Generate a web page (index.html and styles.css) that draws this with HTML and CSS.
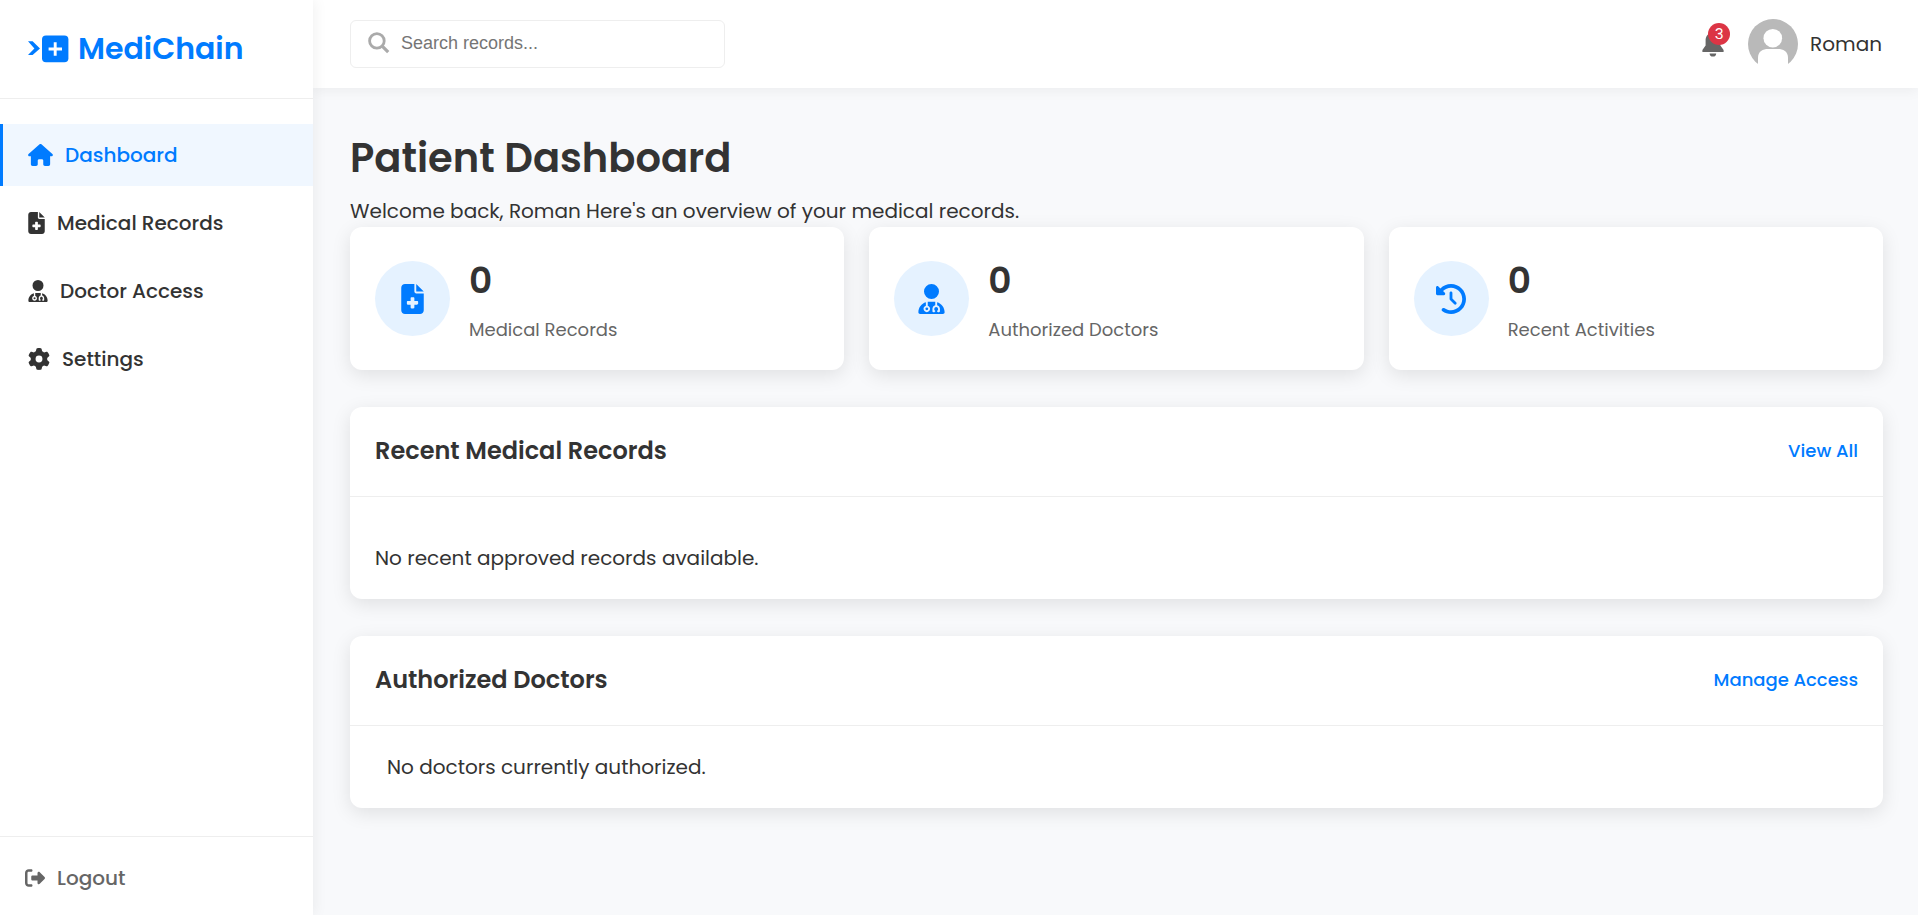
FILE: index.html
```html
<!DOCTYPE html>
<html lang="en">
<head>
<meta charset="utf-8">
<meta name="viewport" content="width=device-width, initial-scale=1">
<title>MediChain - Patient Dashboard</title>
<link rel="stylesheet" href="styles.css">
</head>
<body>
<svg class="sprite" aria-hidden="true">
  <symbol id="i-file" viewBox="0 0 384 512"><path d="M64 0C28.7 0 0 28.7 0 64V448c0 35.3 28.7 64 64 64H320c35.3 0 64-28.7 64-64V160H256c-17.7 0-32-14.3-32-32V0H64zM256 0V128H384L256 0zM160 240c0-8.8 7.2-16 16-16h32c8.8 0 16 7.2 16 16v48h48c8.8 0 16 7.2 16 16v32c0 8.8-7.2 16-16 16H224v48c0 8.8-7.2 16-16 16H176c-8.8 0-16-7.2-16-16V352H112c-8.8 0-16-7.2-16-16V304c0-8.8 7.2-16 16-16h48V240z"/></symbol>
  <symbol id="i-doctor" viewBox="0 0 448 512"><path d="M224 256A128 128 0 1 0 224 0a128 128 0 1 0 0 256zm-96 55.2C54 332.9 0 401.3 0 482.3C0 498.7 13.3 512 29.7 512H418.3c16.4 0 29.7-13.3 29.7-29.7c0-81-54-149.4-128-171.1V362c27.6 7.1 48 32.2 48 62v40c0 8.8-7.2 16-16 16H336c-8.8 0-16-7.2-16-16s7.2-16 16-16V424c0-17.7-14.3-32-32-32s-32 14.3-32 32v24c8.8 0 16 7.2 16 16s-7.2 16-16 16H256c-8.8 0-16-7.2-16-16V424c0-29.8 20.4-54.9 48-62V304.9c-6-.6-12.1-.9-18.3-.9H178.3c-6.2 0-12.3 .3-18.3 .9v65.4c23.1 6.9 40 28.3 40 53.7c0 30.9-25.1 56-56 56s-56-25.1-56-56c0-25.4 16.9-46.8 40-53.7V311.2zM144 448a24 24 0 1 0 0-48 24 24 0 1 0 0 48z"/></symbol>
</svg>
<div class="app">
  <aside class="sidebar">
    <div class="brand">
      <svg class="brand-mark" width="41" height="28" viewBox="0 0 41 28" aria-hidden="true">
        <path fill="currentColor" d="M0 6.3H4.6L12 13.5L4.6 20H0L6.4 13.5Z"/>
        <rect x="14" y="0.6" width="26.4" height="26.6" rx="4" fill="currentColor"/>
        <path d="M27.2 7.2V20.8M20.6 14H34" stroke="#fff" stroke-width="2.9" fill="none"/>
      </svg>
      <span class="brand-name">MediChain</span>
    </div>
    <nav class="nav" aria-label="Main">
      <a class="nav-link active" href="#dashboard">
        <svg width="25" height="22" viewBox="0 0 576 512" aria-hidden="true"><path d="M575.8 255.5c0 18-15 32.1-32 32.1h-32l.7 160.2c0 2.7-.2 5.4-.5 8.1V472c0 22.1-17.9 40-40 40H456c-1.1 0-2.2 0-3.3-.1c-1.4 .1-2.8 .1-4.2 .1H416 392c-22.1 0-40-17.9-40-40V448 384c0-17.7-14.3-32-32-32H256c-17.7 0-32 14.3-32 32v64 24c0 22.1-17.9 40-40 40H160 128.1c-1.5 0-3-.1-4.5-.2c-1.2 .1-2.4 .2-3.6 .2H104c-22.1 0-40-17.9-40-40V360c0-.9 0-1.9 .1-2.8V287.6H32c-18 0-32-14-32-32.1c0-9 3-17 10-24L266.4 8c7-7 15-8 22-8s15 2 21 7L564.8 231.5c8 7 12 15 11 24z"/></svg>
        <span>Dashboard</span>
      </a>
      <a class="nav-link" href="#records">
        <svg width="17" height="22" aria-hidden="true"><use href="#i-file"/></svg>
        <span>Medical Records</span>
      </a>
      <a class="nav-link" href="#access">
        <svg width="20" height="22" aria-hidden="true"><use href="#i-doctor"/></svg>
        <span>Doctor Access</span>
      </a>
      <a class="nav-link" href="#settings">
        <svg width="22" height="22" viewBox="0 0 512 512" aria-hidden="true"><path d="M495.9 166.6c3.2 8.7 .5 18.4-6.4 24.6l-43.3 39.4c1.1 8.3 1.7 16.8 1.7 25.4s-.6 17.1-1.7 25.4l43.3 39.4c6.9 6.2 9.6 15.9 6.4 24.6c-4.4 11.9-9.7 23.3-15.8 34.3l-4.7 8.1c-6.6 11-14 21.4-22.1 31.2c-5.9 7.2-15.7 9.6-24.5 6.8l-55.7-17.7c-13.4 10.3-28.2 18.9-44 25.4l-12.5 57.1c-2 9.1-9 16.3-18.2 17.8c-13.8 2.3-28 3.5-42.5 3.5s-28.7-1.2-42.5-3.5c-9.2-1.5-16.2-8.7-18.2-17.8l-12.5-57.1c-15.8-6.5-30.6-15.1-44-25.4L83.1 425.9c-8.8 2.8-18.6 .3-24.5-6.8c-8.1-9.8-15.5-20.2-22.1-31.2l-4.7-8.1c-6.1-11-11.4-22.4-15.8-34.3c-3.2-8.7-.5-18.4 6.4-24.6l43.3-39.4C64.6 273.1 64 264.6 64 256s.6-17.1 1.7-25.4L22.4 191.2c-6.9-6.2-9.6-15.9-6.4-24.6c4.4-11.9 9.7-23.3 15.8-34.3l4.7-8.1c6.6-11 14-21.4 22.1-31.2c5.9-7.2 15.7-9.6 24.5-6.8l55.7 17.7c13.4-10.3 28.2-18.9 44-25.4l12.5-57.1c2-9.1 9-16.3 18.2-17.8C227.3 1.2 241.5 0 256 0s28.7 1.2 42.5 3.5c9.2 1.5 16.2 8.7 18.2 17.8l12.5 57.1c15.8 6.5 30.6 15.1 44 25.4l55.7-17.7c8.8-2.8 18.6-.3 24.5 6.8c8.1 9.8 15.5 20.2 22.1 31.2l4.7 8.1c6.1 11 11.4 22.4 15.8 34.3zM256 336a80 80 0 1 0 0-160 80 80 0 1 0 0 160z"/></svg>
        <span>Settings</span>
      </a>
    </nav>
    <div class="sidebar-footer">
      <a class="logout" href="#logout">
        <svg width="20" height="20" viewBox="0 0 512 512" aria-hidden="true"><path d="M377.9 105.9L500.7 228.7c7.2 7.2 11.3 17.1 11.3 27.3s-4.1 20.1-11.3 27.3L377.9 406.1c-6.4 6.4-15 9.9-24 9.9c-18.7 0-33.9-15.2-33.9-33.9l0-62.1-128 0c-17.7 0-32-14.3-32-32l0-64c0-17.7 14.3-32 32-32l128 0 0-62.1c0-18.7 15.2-33.9 33.9-33.9c9 0 17.6 3.6 24 9.9zM160 96L96 96c-17.7 0-32 14.3-32 32l0 256c0 17.7 14.3 32 32 32l64 0c17.7 0 32 14.3 32 32s-14.3 32-32 32l-64 0c-53 0-96-43-96-96L0 128C0 75 43 32 96 32l64 0c17.7 0 32 14.3 32 32s-14.3 32-32 32z"/></svg>
        <span>Logout</span>
      </a>
    </div>
  </aside>

  <div class="main">
    <header class="topbar">
      <label class="search">
        <svg width="22" height="22" viewBox="0 0 22 22" aria-hidden="true"><circle cx="8.9" cy="8.9" r="7.3" fill="none" stroke="#aaa" stroke-width="2.8"/><path d="M14.2 14.2L20.2 20.2" stroke="#aaa" stroke-width="3.2"/></svg>
        <input class="search-input" type="search" placeholder="Search records..." aria-label="Search records">
      </label>
      <div class="user-area">
        <button class="bell" type="button" aria-label="Notifications">
          <svg width="22" height="26" viewBox="0 0 22 26" aria-hidden="true"><path d="M11 0C12.2 0 13 .9 13 2C16.6 2.9 18.4 6 18.4 9.6V14.6L21.6 19V21H.4V19L3.6 14.6V9.6C3.6 6 5.4 2.9 9 2C9 .9 9.8 0 11 0ZM7.6 22.4H14.2A3.3 3.1 0 0 1 7.6 22.4Z"/></svg>
          <span class="badge">3</span>
        </button>
        <div class="user">
          <svg class="avatar" width="50" height="50" viewBox="0 0 50 50" role="img" aria-label="Roman's avatar">
            <circle cx="25" cy="25" r="25" fill="#b9b9b9"/>
            <circle cx="24.8" cy="19.2" r="9.3" fill="#fff"/>
            <path d="M10 50V39C10 32 15 30 20 30H30C35 30 40 32 40 39V50Z" fill="#fff"/>
          </svg>
          <span class="user-name">Roman</span>
        </div>
      </div>
    </header>

    <main class="content">
      <h1 class="page-title">Patient Dashboard</h1>
      <p class="text">Welcome back, Roman Here's an overview of your medical records.</p>

      <div class="stats">
        <article class="stat">
          <span class="stat-icon"><svg width="23" height="30" aria-hidden="true"><use href="#i-file"/></svg></span>
          <div><p class="stat-value">0</p><p class="stat-label">Medical Records</p></div>
        </article>
        <article class="stat">
          <span class="stat-icon"><svg width="27" height="30" aria-hidden="true"><use href="#i-doctor"/></svg></span>
          <div><p class="stat-value">0</p><p class="stat-label">Authorized Doctors</p></div>
        </article>
        <article class="stat">
          <span class="stat-icon"><svg width="30" height="30" viewBox="0 0 512 512" aria-hidden="true"><path d="M75 75L41 41C25.9 25.9 0 36.6 0 57.9V168c0 13.3 10.7 24 24 24H134.1c21.4 0 32.1-25.9 17-41l-30.8-30.8C155 85.5 203 64 256 64c106 0 192 86 192 192s-86 192-192 192c-40.8 0-78.6-12.7-109.7-34.4c-14.5-10.1-34.4-6.6-44.6 7.9s-6.6 34.4 7.9 44.6C151.2 495 201.7 512 256 512c141.4 0 256-114.6 256-256S397.4 0 256 0C185.3 0 121.3 28.7 75 75zm181 53c-13.3 0-24 10.7-24 24V256c0 6.4 2.5 12.5 7 17l72 72c9.4 9.4 24.6 9.4 33.9 0s9.4-24.6 0-33.9l-65-65V152c0-13.3-10.7-24-24-24z"/></svg></span>
          <div><p class="stat-value">0</p><p class="stat-label">Recent Activities</p></div>
        </article>
      </div>

      <section class="panel">
        <div class="panel-head">
          <h2 class="panel-title">Recent Medical Records</h2>
          <a class="panel-link" href="#records">View All</a>
        </div>
        <div class="panel-body records"><p class="text">No recent approved records available.</p></div>
      </section>

      <section class="panel">
        <div class="panel-head">
          <h2 class="panel-title">Authorized Doctors</h2>
          <a class="panel-link" href="#access">Manage Access</a>
        </div>
        <div class="panel-body doctors"><p class="text">No doctors currently authorized.</p></div>
      </section>
    </main>
  </div>
</div>
</body>
</html>
```
FILE: styles.css
```css
* { box-sizing: border-box; margin: 0; padding: 0; }

body {
  font-family: Poppins, Inter, sans-serif;
  font-size: 20px;
  line-height: 32px;
  color: #333;
  background: #f8f9fb;
}

a { text-decoration: none; }
svg { display: block; flex: none; fill: currentColor; }
.sprite { position: absolute; width: 0; height: 0; }

.app { display: flex; min-height: 100vh; }

.sidebar {
  position: relative;
  z-index: 1;
  flex: none;
  display: flex;
  flex-direction: column;
  width: 313px;
  background: #fff;
  box-shadow: 3px 0 12px rgba(0, 0, 0, 0.05);
}

.brand {
  display: flex;
  align-items: center;
  gap: 9px;
  padding: 25px 28px;
  border-bottom: 1px solid #eee;
  color: #007bff;
}
.brand-name { font-size: 30px; font-weight: 600; line-height: 48px; }

.nav { display: flex; flex-direction: column; gap: 6px; padding: 25px 0; }
.nav-link {
  display: flex;
  align-items: center;
  gap: 12px;
  padding: 15px 25px;
  border-left: 3px solid transparent;
  color: #333;
  font-weight: 500;
}
.nav-link.active { background: #f0f7ff; border-left-color: #007bff; color: #007bff; }

.sidebar-footer { margin-top: auto; padding: 25px 25px 21px; border-top: 1px solid #eee; }
.logout { display: flex; align-items: center; gap: 12px; color: #666; font-weight: 500; }

.main { flex: 1; min-width: 0; }

.topbar {
  display: flex;
  align-items: center;
  justify-content: space-between;
  padding: 19px 36px 19px 37px;
  background: #fff;
  box-shadow: 0 3px 12px rgba(0, 0, 0, 0.05);
}

.search {
  display: flex;
  align-items: center;
  gap: 11px;
  width: 375px;
  height: 48px;
  padding: 0 17px 2px;
  border: 1px solid #eee;
  border-radius: 6px;
}
.search-input {
  flex: 1;
  min-width: 0;
  border: 0;
  outline: 0;
  background: none;
  font: 18px "Liberation Sans", sans-serif;
  color: #333;
}
.search-input::placeholder { color: #757575; }

.user-area { display: flex; align-items: center; gap: 24px; }
.bell { position: relative; border: 0; background: none; color: #666; cursor: pointer; }
.badge {
  position: absolute;
  top: -8px;
  right: -6px;
  width: 22px;
  height: 22px;
  border-radius: 50%;
  background: #dc3545;
  color: #fff;
  font: 15px/22px Poppins, Inter, sans-serif;
  text-align: center;
}
.user { display: flex; align-items: center; gap: 12px; }

.content { padding: 37px 35px 37px 37px; }
.page-title { margin-bottom: 4px; font-size: 40px; font-weight: 600; line-height: 66px; }

.stats { display: grid; grid-template-columns: repeat(3, 1fr); gap: 25px; }
.stat,
.panel { border-radius: 12px; background: #fff; box-shadow: 0 5px 19px rgba(0, 0, 0, 0.1); }
.stat { display: flex; align-items: center; gap: 19px; padding: 25px; }
.stat-icon {
  display: grid;
  place-items: center;
  flex: none;
  width: 75px;
  height: 75px;
  border-radius: 50%;
  background: #e5f2ff;
  color: #007bff;
}
.stat-value { margin-bottom: 4px; font-size: 36px; font-weight: 600; line-height: 58px; }
.stat-label { font-size: 18px; line-height: 31px; color: #666; }

.panel { margin-top: 37px; }
.panel-head {
  display: flex;
  align-items: center;
  justify-content: space-between;
  padding: 25px 25px 27px;
  border-bottom: 1px solid #eee;
}
.panel-title { font-size: 24px; font-weight: 600; line-height: 37px; }
.panel-link { font-size: 18px; font-weight: 500; color: #007bff; }
.panel-body { padding: 25px; }
.records { padding-top: 45px; }
.doctors { padding-left: 37px; }
```
